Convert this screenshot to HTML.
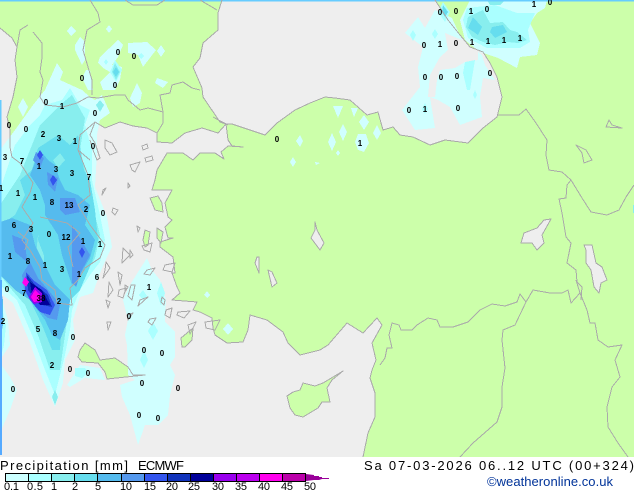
<!DOCTYPE html>
<html><head><meta charset="utf-8"><style>
html,body{margin:0;padding:0;background:#fff;width:634px;height:490px;overflow:hidden}
svg{display:block}
.n{font:bold 8px "Liberation Sans",sans-serif;fill:#000;text-anchor:middle}
.l{font:11px "Liberation Sans",sans-serif;fill:#000}
.t{font:13px "Liberation Sans",sans-serif;fill:#000}
</style></head><body>
<svg width="634" height="490" viewBox="0 0 634 490" xmlns="http://www.w3.org/2000/svg">
<rect width="634" height="457" fill="#eeeeee"/>
<g fill="#ccffaa" shape-rendering="crispEdges">
<path id="gr" d="M0,0L0,28 12,38 17,47 15,60 17,77 13,97 7,117 10,130 10,147 12,157 20,163 33,183 30,193 22,207 33,223 22,240 30,250 40,267 42,280 55,290 57,303 72,305 70,288 78,280 85,268 100,258 105,245 90,225 78,205 90,195 88,175 78,150 80,135 95,122 105,128 120,122 133,126 147,128 157,133 157,142 172,143 185,133 202,128 218,133 226,124 220,122 203,97 202,88 193,67 200,58 203,43 218,30 218,13 222,0Z"/>
<path d="M435,0L448,20 460,35 470,47 483,52 490,63 497,77 502,97 497,117 483,128 468,143 445,140 430,145 413,137 400,135 393,127 383,130 378,112 367,115 350,100 335,98 325,97 310,103 295,110 277,123 265,135 250,130 232,124 226,124 228,140 232,146 243,147 228,146 221,152 224,159 215,153 200,153 193,160 183,153 167,153 157,170 155,180 152,190 172,190 165,203 168,217 172,220 165,227 168,238 173,238 160,242 160,247 173,257 175,273 172,273 177,287 180,293 172,300 197,302 193,310 200,312 212,318 213,328 215,335 227,343 243,342 248,330 250,315 267,320 283,332 288,343 300,355 320,350 328,345 347,323 363,333 377,318 382,325 372,343 376,360 372,370 370,378 375,393 375,417 368,433 363,457 634,457 634,0Z"/>
<path d="M78,357 80,350 85,343 95,350 100,360 115,358 128,367 133,375 145,375 107,379 105,372 98,363 82,362Z"/>
<path d="M181,338 193,328 192,340 185,347 182,347Z"/>
<path d="M150,198 158,196 162,203 163,212 155,210Z"/>
<path d="M145,230 150,232 148,245 145,247 143,240Z"/>
<path d="M157,228 163,232 161,243 157,238Z"/>
<path d="M287,396 290,408 295,415 303,417 318,408 322,402 330,402 327,388 332,380 343,371 323,383 315,386 303,383 300,390 293,392Z"/>
</g>
<g fill="#eeeeee" shape-rendering="crispEdges">
<path d="M521,243 524,233 537,228 544,220 551,219 542,235 544,243 537,250 532,243Z"/>
<path d="M584,245 592,245 596,263 602,267 607,280 601,283 599,293 594,287 591,270 586,263 586,250Z"/>
<path d="M315,222 317,230 324,243 320,250 311,238 315,230Z"/>
<path d="M257,257 259,257 259,273 255,263Z"/>
<path d="M268,270 272,272 277,283 272,287Z"/>
</g>
<!-- precipitation -->
<g shape-rendering="crispEdges">
<g fill="#d0ffff">
<path d="M71,26 76,31 71,36 67,31Z M109,25 112,29 109,33 106,29Z M75,45 80,37 85,42 85,60 82,65 75,50Z M118,40 123,45 118,57 112,65 122,67 120,80 115,90 103,90 100,82 110,72 103,68 98,63 100,57Z M128,43 147,42 156,50 143,67 138,55 128,53Z M161,45 165,51 161,57 157,51Z M157,78 168,82 163,88 155,83Z M137,83 142,93 140,103 133,107 130,98Z M86,70 90,70 93,90 88,90 82,78Z M23,98 28,107 23,117 18,107Z"/>
<path d="M57,63 63,72 60,80 82,90 90,97 95,100 102,95 110,113 100,120 97,135 97,153 95,187 107,217 112,247 107,257 100,273 93,293 80,297 73,320 75,340 65,360 63,383 55,407 43,380 30,343 13,303 0,293 0,150 15,130 33,105 45,90Z"/>
<path d="M0,293 8,320 10,345 0,360Z M0,363 10,377 17,390 10,410 0,433Z"/>
<path d="M147,258 152,270 160,280 166,300 165,322 175,332 175,357 170,365 175,375 170,395 168,415 158,425 145,425 138,445 130,415 122,397 120,385 135,380 128,375 127,345 125,335 128,320 123,300 130,285 138,272Z"/>
<path d="M67,385 80,365 100,368 105,380 85,378 70,387Z"/>
<path d="M300,135 303,141 300,147 296,141Z M332,133 336,142 332,151 328,142Z M343,124 347,132 343,141 339,132Z M333,106 343,106 338,118Z M351,108 358,108 354,117Z M364,115 369,122 364,130 359,122Z M377,125 381,133 377,140 373,133Z M358,134 366,134 369,143 364,152 358,150 355,142Z M293,157 296,162 293,167 290,162Z M315,162 320,163 316,165Z M338,150 340,153 338,156 336,153Z M207,291 210,295 207,298 204,295Z M228,323 233,329 228,335 223,329Z"/>
<path d="M405,33 418,17 425,28 435,10 452,18 462,40 482,55 485,65 495,80 483,78 480,97 482,117 460,125 450,107 438,100 430,97 435,128 415,130 402,110 420,87 418,67 423,47Z"/>
<path d="M470,0 547,0 545,8 537,13 530,23 540,43 537,55 520,57 517,68 498,58 480,52 465,40 460,20Z"/>
</g>
<path fill="#eeeeee" d="M445,33 462,40 478,52 478,60 465,62 455,68 440,70 437,80 435,97 428,97 430,75 440,57 448,50Z"/>
<g fill="#aaffff">
<path d="M45,105 62,100 70,88 80,105 90,110 85,125 92,150 92,180 100,215 105,240 100,262 90,275 80,290 72,310 70,330 65,355 55,395 45,370 32,335 17,300 0,285 0,190 15,145 30,125 40,115Z"/>
<path d="M161,282 165,293 161,306 157,293Z M143,290 147,296 143,300 139,295Z M153,322 158,331 153,340 148,331Z M144,350 148,360 144,368 140,360Z M75,368 85,368 88,372 82,378 75,376Z M115,60 122,70 116,82 110,72Z M106,59 108,62 106,65 104,62Z M141,53 144,56 141,59 138,56Z"/>
<path d="M467,8 495,5 517,13 535,13 528,30 530,42 520,48 503,48 487,48 468,38 463,20Z"/>
<path d="M413,30 416,35 413,41 410,35Z M435,29 438,34 435,39 432,34Z M465,62 475,60 470,90 467,90 463,73Z M475,90 477,95 475,99 473,95Z M425,103 428,109 425,114 422,109Z M443,2 450,12 445,22 438,12Z M0,300 6,325 4,345 0,360Z"/>
</g>
<g fill="#88eeee">
<path d="M40,125 60,105 72,95 85,118 80,150 88,180 95,215 100,235 95,258 85,275 78,290 70,300 65,335 60,370 50,370 38,335 25,305 12,290 0,275 0,205 10,190 20,175 30,150Z"/>
<path d="M468,17 483,10 490,23 503,22 510,30 517,32 527,40 518,43 508,42 495,45 483,42 472,37 466,27Z M487,0 505,0 500,5 490,5Z"/>
<path d="M115,63 120,72 116,80 112,72Z M100,100 104,105 100,112 96,105Z M55,390 58,397 55,405 52,397Z"/>
</g>
<path fill="#aaffff" d="M60,140 68,150 62,160 56,150Z M40,238 45,245 43,258 38,250Z"/>
<g fill="#66ddee">
<path d="M38,148 58,135 70,145 78,135 84,170 90,180 95,210 98,240 92,262 80,290 70,300 62,320 60,350 52,350 42,325 30,300 15,290 0,270 0,225 15,215 25,195 20,180 32,170Z"/>
<path d="M473,17 482,27 478,35 468,28Z M492,27 503,25 507,32 495,38 490,32Z M443,5 448,12 445,17 442,12Z M116,67 119,72 116,77 113,72Z"/>
</g>
<path fill="#88eeee" d="M60,153 65,160 58,168 53,160Z M38,235 44,245 44,262 36,255Z"/>
<g fill="#55bbee">
<path d="M0,222 12,218 30,225 35,245 45,265 55,285 70,300 68,320 60,340 52,335 45,320 30,300 15,290 0,275Z"/>
<path d="M40,150 48,160 55,165 60,180 65,190 78,195 90,205 85,225 95,240 90,258 80,275 72,285 62,255 58,235 45,215 45,205 40,190 30,175Z"/>
<path d="M0,285 3,300 3,325 0,340Z"/>
</g>
<path fill="#66ddee" d="M40,218 52,225 60,255 45,258 38,240Z"/>
<g fill="#5599ee">
<path d="M30,262 38,278 50,292 60,305 57,320 48,318 38,310 30,300 24,290 22,275Z"/>
<path d="M60,198 75,198 80,212 65,215 60,210Z M72,225 80,238 90,255 82,270 76,287 72,283 72,262Z M12,235 25,240 27,262 15,252Z M36,152 44,158 40,168 33,160Z M47,172 58,178 55,192 48,185Z"/>
</g>
<g fill="#3355ee">
<path d="M26,272 33,280 47,290 55,305 50,315 40,312 30,300 25,290Z"/>
<path d="M40,150 43,155 40,160 37,155Z M53,175 57,180 53,186 50,180Z M82,247 85,252 82,258 79,252Z"/>
</g>
<path fill="#1133bb" d="M27,275 35,285 48,295 52,307 42,305 34,298 28,290Z"/>
<path fill="#000099" d="M30,282 42,290 50,305 40,305 32,295Z"/>
<path fill="#9900ee" d="M35,287 42,293 42,302 34,304 29,297Z"/>
<path fill="#ff00ee" d="M35,290 40,295 39,301 34,302 31,297Z M25,277 29,282 26,287 22,283Z"/>
<rect x="0" y="0" width="634" height="1.5" fill="#66ccff"/>
<rect x="0" y="100" width="1.5" height="180" fill="#66ccff"/>
<rect x="0" y="280" width="2" height="175" fill="#55aaff"/>
<rect x="633" y="205" width="1" height="8" fill="#88eeee"/>
</g>
<!-- coast / borders -->
<g fill="none" stroke="#aaaaaa" stroke-width="1" stroke-linejoin="round" shape-rendering="crispEdges">
<path d="M0,28 12,38 17,47 15,60 17,77 13,97 7,117 10,130 10,147 12,157 20,163 33,183 30,193 22,207 33,223 22,240 30,250 40,267 42,280 55,290 57,303 72,305 70,288 78,280 85,268 100,258 105,245 90,225 78,205 90,195 88,175 78,150 80,135 95,122 105,128 120,122 133,126 147,128 157,133 157,142 172,143 185,133 202,128 218,133 226,124 220,122 203,97 202,88 193,67 200,58 203,43 218,30 218,13 222,0"/>
<path d="M435,0L448,20 460,35 470,47 483,52 490,63 497,77 502,97 497,117 483,128 468,143 445,140 430,145 413,137 400,135 393,127 383,130 378,112 367,115 350,100 335,98 325,97 310,103 295,110 277,123 265,135 250,130 232,124 226,124 228,140 232,146 243,147 228,146 221,152 224,159 215,153 200,153 193,160 183,153 167,153 157,170 155,180 152,190 172,190 165,203 168,217 172,220 165,227 168,238 173,238 160,242 160,247 173,257 175,273 172,273 177,287 180,293 172,300 197,302 193,310 200,312 212,318 213,328 215,335 227,343 243,342 248,330 250,315 267,320 283,332 288,343 300,355 320,350 328,345 347,323 363,333 377,318 382,325 372,343 376,360 372,370 370,378 375,393 375,417 368,433 363,457"/>
<path d="M380,365 385,358 387,348 392,348 389,335 392,323 399,325 401,330 412,330 417,325 428,318 437,320 440,327 453,327 468,322 480,310 492,304 505,306 517,302 520,294 526,302 533,290 550,293 562,293 568,290 571,303 580,293 576,280"/>
<path d="M526,302 515,325 503,330 502,340 505,368 502,387 502,407 497,422 473,443 460,457"/>
<path d="M580,293 587,310 590,323 595,323 598,340 608,347 622,345 615,360 620,377 612,387 607,407 608,427 618,443 628,457"/>
<path d="M571,180 567,185 566,198 559,199 562,213 566,237 571,243 567,263 576,270 577,282 582,287 581,300"/>
<path d="M497,115 519,115 526,109 536,123 547,140 546,155 549,170 562,172 571,180 582,198 591,212 607,215 619,210 626,197 634,185"/>
<path d="M521,243 524,233 537,228 544,220 551,219 542,235 544,243 537,250 532,243Z"/>
<path d="M584,245 592,245 596,263 602,267 607,280 601,283 599,293 594,287 591,270 586,263 586,250Z"/>
<path d="M576,145 586,150 592,160 584,163 582,153Z M606,127 609,120 612,125 622,128Z"/>
<path d="M315,222 317,230 324,243 320,250 311,238 315,230Z M257,257 259,257 259,273 255,263Z M268,270 272,272 277,283 272,287Z"/>
<path d="M287,396 290,408 295,415 303,417 318,408 322,402 330,402 327,388 332,380 343,371 323,383 315,386 303,383 300,390 293,392Z"/>
<path d="M78,357 80,350 85,343 95,350 100,360 115,358 128,367 133,375 145,375 107,379 105,372 98,363 82,362Z"/>
<path d="M181,338 193,328 192,340 185,347 182,347Z"/>
<path d="M150,198 158,196 162,203 163,212 155,210Z M145,230 150,232 148,245 145,247 143,240Z M157,228 163,232 161,243 157,238Z"/>
<path d="M28,25 20,30 17,47 M33,32 42,43 42,58 40,72 43,80 40,97 45,105 63,107 77,103 88,97 98,98 115,95 125,95 128,100 140,110 148,108 163,112 160,95 170,93 172,85 183,82 192,88 200,90"/>
<path d="M90,0 98,13 100,22 87,30 83,50 88,67 92,80 92,95 M125,0 133,5 157,5 165,0 M200,0 217,10 M163,112 163,123 157,133 M213,117 228,125"/>
<path d="M95,122 90,135 95,143 100,158 97,160 93,150 90,140 M78,150 90,160 M40,217 67,223 80,233 68,247 73,267 M18,232 28,240 25,250"/>
<path d="M105,140 112,143 117,152 110,155 105,148Z M142,146 147,144 148,148 143,150Z M145,158 152,156 153,160 146,162Z M130,165 140,162 135,172 132,170Z M128,183 130,186 128,188Z M113,208 118,210 115,215 112,212Z M103,190 106,188 102,195Z M137,226 140,228 138,232Z M142,246 152,243 150,252 144,250Z M123,248 130,255 122,263Z M165,265 175,263 172,272 163,270Z M147,270 155,268 150,275 144,274Z M162,297 165,300 164,305 161,302Z M106,262 110,268 103,278 105,270Z M109,282 113,290 108,297Z M118,272 122,275 120,285Z M130,250 133,255 130,258Z M125,285 128,287 125,292Z M106,300 110,302 108,308Z M119,290 126,288 123,298 118,296Z M131,285 135,285 132,300 128,296Z M140,300 148,297 138,306Z M127,315 133,313 128,320Z M150,319 156,318 152,325 148,322Z M107,322 111,322 108,330Z M166,310 172,308 170,318 165,315Z M178,312 190,311 184,318 177,315Z M205,322 220,320 215,330 206,328Z M188,325 196,322 190,334Z"/>
</g>
<!-- numbers -->
<g class="n">
<text x="46" y="105">0</text><text x="62" y="109">1</text><text x="95" y="116">0</text><text x="9" y="128">0</text><text x="26" y="132">0</text><text x="118" y="55">0</text><text x="134" y="59">0</text><text x="82" y="81">0</text><text x="115" y="88">0</text>
<text x="43" y="137">2</text><text x="59" y="141">3</text><text x="75" y="144">1</text><text x="93" y="149">0</text><text x="5" y="160">3</text><text x="22" y="164">7</text><text x="39" y="169">1</text><text x="56" y="172">3</text><text x="72" y="176">3</text><text x="89" y="180">7</text><text x="1" y="191">1</text><text x="18" y="196">1</text><text x="35" y="200">1</text><text x="52" y="205">8</text><text x="69" y="208">13</text><text x="86" y="212">2</text><text x="103" y="216">0</text><text x="14" y="228">6</text><text x="31" y="232">3</text><text x="49" y="237">0</text><text x="66" y="240">12</text><text x="83" y="244">1</text><text x="100" y="247">1</text><text x="10" y="259">1</text><text x="28" y="264">8</text><text x="45" y="268">1</text><text x="62" y="272">3</text>
<text x="79" y="277">1</text><text x="97" y="280">6</text><text x="7" y="292">0</text><text x="24" y="296">7</text><text x="41" y="301">38</text><text x="59" y="304">2</text><text x="149" y="290">1</text><text x="129" y="319">0</text><text x="3" y="324">2</text><text x="38" y="332">5</text><text x="55" y="336">8</text><text x="73" y="340">0</text><text x="144" y="353">0</text><text x="162" y="356">0</text><text x="52" y="368">2</text><text x="70" y="372">0</text><text x="88" y="376">0</text><text x="142" y="386">0</text><text x="13" y="392">0</text><text x="178" y="391">0</text><text x="139" y="418">0</text><text x="158" y="421">0</text>
<text x="440" y="15">0</text><text x="456" y="14">0</text><text x="471" y="14">1</text><text x="487" y="12">0</text><text x="534" y="7">1</text><text x="550" y="5">0</text><text x="424" y="48">0</text><text x="440" y="47">1</text><text x="456" y="46">0</text><text x="472" y="45">1</text><text x="488" y="44">1</text><text x="504" y="43">1</text><text x="520" y="41">1</text><text x="490" y="76">0</text><text x="425" y="80">0</text><text x="441" y="80">0</text><text x="457" y="79">0</text><text x="409" y="113">0</text><text x="425" y="112">1</text><text x="458" y="111">0</text>
<text x="277" y="142">0</text><text x="360" y="146">1</text>
</g>
<!-- footer -->
<text class="t" x="0" y="470" textLength="128">Precipitation [mm]</text>
<text class="t" x="138" y="470" textLength="46">ECMWF</text>
<text class="t" x="364" y="470" textLength="270">Sa 07-03-2026 06..12 UTC (00+324)</text>
<text x="487" y="486" textLength="126" style="font:13px 'Liberation Sans',sans-serif;fill:#003399">©weatheronline.co.uk</text>
<g stroke="#000" stroke-width="1" shape-rendering="crispEdges">
<rect x="5.5" y="473.5" width="23" height="8" fill="#ccffff"/>
<rect x="28.5" y="473.5" width="23" height="8" fill="#aaffff"/>
<rect x="51.5" y="473.5" width="23" height="8" fill="#88eeee"/>
<rect x="74.5" y="473.5" width="23" height="8" fill="#66ddee"/>
<rect x="97.5" y="473.5" width="24" height="8" fill="#55bbee"/>
<rect x="121.5" y="473.5" width="23" height="8" fill="#5599ee"/>
<rect x="144.5" y="473.5" width="23" height="8" fill="#3355ee"/>
<rect x="167.5" y="473.5" width="23" height="8" fill="#1133bb"/>
<rect x="190.5" y="473.5" width="23" height="8" fill="#000099"/>
<rect x="213.5" y="473.5" width="23" height="8" fill="#9900ee"/>
<rect x="236.5" y="473.5" width="23" height="8" fill="#bb00ee"/>
<rect x="259.5" y="473.5" width="23" height="8" fill="#ff00ee"/>
<rect x="282.5" y="473.5" width="23" height="8" fill="#bb00aa"/>
</g>
<path fill="#990099" d="M306,474 314,475 314,476 319,476 319,477 322,477 322,478 329,478 329,479 322,479 319,480 314,480 306,481Z"/>
<g class="l">
<text x="4" y="490" textLength="15">0.1</text><text x="27" y="490" textLength="16">0.5</text><text x="51" y="490">1</text><text x="72" y="490">2</text><text x="95" y="490">5</text><text x="120" y="490" textLength="12">10</text><text x="144" y="490" textLength="12">15</text><text x="166" y="490" textLength="12">20</text><text x="188" y="490" textLength="12">25</text><text x="212" y="490" textLength="12">30</text><text x="235" y="490" textLength="12">35</text><text x="258" y="490" textLength="12">40</text><text x="281" y="490" textLength="12">45</text><text x="304" y="490" textLength="12">50</text>
</g>
</svg>
</body></html>
